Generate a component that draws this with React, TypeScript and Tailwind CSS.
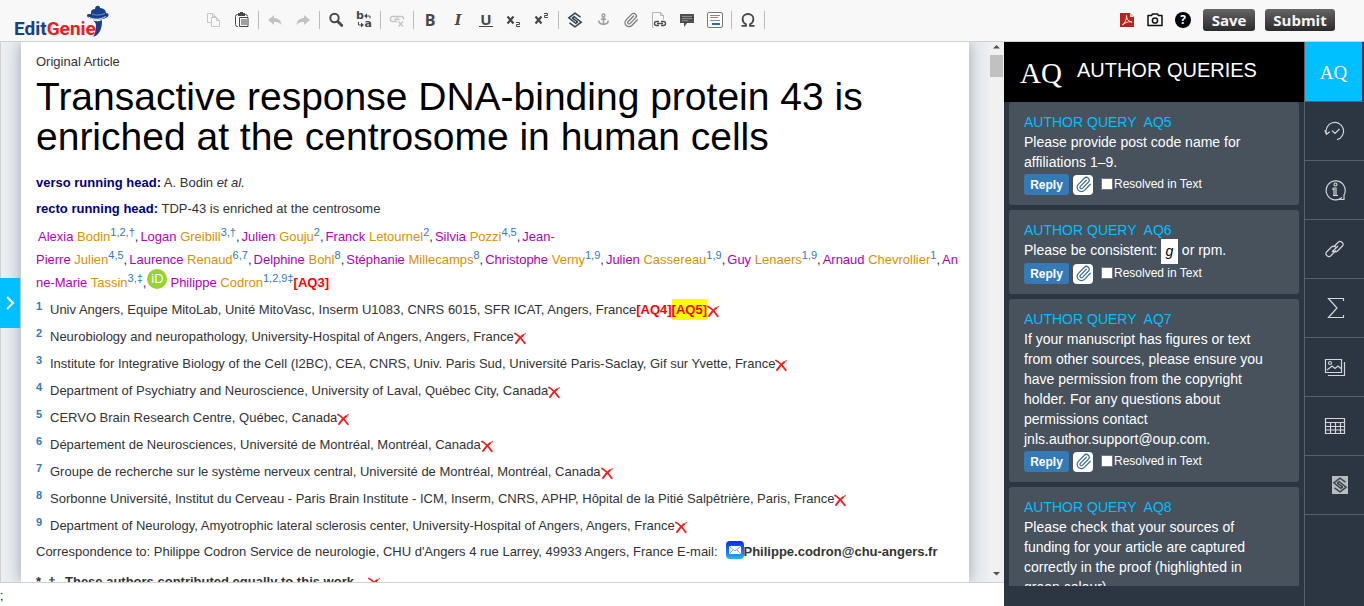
import React from "react";
import { Paperclip } from "lucide-react";

type Author = { first: string; last: string; refs: string };

const authorLines: Author[][] = [
  [
    { first: "Alexia", last: "Bodin", refs: "1,2,†" },
    { first: "Logan", last: "Greibill", refs: "3,†" },
    { first: "Julien", last: "Gouju", refs: "2" },
    { first: "Franck", last: "Letournel", refs: "2" },
    { first: "Silvia", last: "Pozzi", refs: "4,5" },
    { first: "Jean-", last: "", refs: "" },
  ],
  [
    { first: "Pierre", last: "Julien", refs: "4,5" },
    { first: "Laurence", last: "Renaud", refs: "6,7" },
    { first: "Delphine", last: "Bohl", refs: "8" },
    { first: "Stéphanie", last: "Millecamps", refs: "8" },
    { first: "Christophe", last: "Verny", refs: "1,9" },
    { first: "Julien", last: "Cassereau", refs: "1,9" },
    { first: "Guy", last: "Lenaers", refs: "1,9" },
    { first: "Arnaud", last: "Chevrollier", refs: "1" },
    { first: "An", last: "", refs: "" },
  ],
];

const affiliations = [
  "Univ Angers, Equipe MitoLab, Unité MitoVasc, Inserm U1083, CNRS 6015, SFR ICAT, Angers, France",
  "Neurobiology and neuropathology, University-Hospital of Angers, Angers, France",
  "Institute for Integrative Biology of the Cell (I2BC), CEA, CNRS, Univ. Paris Sud, Université Paris-Saclay, Gif sur Yvette, France",
  "Department of Psychiatry and Neuroscience, University of Laval, Québec City, Canada",
  "CERVO Brain Research Centre, Québec, Canada",
  "Département de Neurosciences, Université de Montréal, Montréal, Canada",
  "Groupe de recherche sur le système nerveux central, Université de Montréal, Montréal, Canada",
  "Sorbonne Université, Institut du Cerveau - Paris Brain Institute - ICM, Inserm, CNRS, APHP, Hôpital de la Pitié Salpêtrière, Paris, France",
  "Department of Neurology, Amyotrophic lateral sclerosis center, University-Hospital of Angers, Angers, France",
];

const queries: { id: string; lines: React.ReactNode[] }[] = [
  { id: "AQ5", lines: ["Please provide post code name for", "affiliations 1–9."] },
  {
    id: "AQ6",
    lines: [
      <>
        Please be consistent:{" "}
        <i className="-mt-[2px] -mb-[3px] inline-block h-[25px] w-[17px] bg-white text-center align-middle leading-[25px] text-black">g</i> or rpm.
      </>,
    ],
  },
  {
    id: "AQ7",
    lines: [
      "If your manuscript has figures or text",
      "from other sources, please ensure you",
      "have permission from the copyright",
      "holder. For any questions about",
      "permissions contact",
      "jnls.author.support@oup.com.",
    ],
  },
  {
    id: "AQ8",
    lines: [
      "Please check that your sources of",
      "funding for your article are captured",
      "correctly in the proof (highlighted in",
      "green colour).",
    ],
  },
];

function Svg({ size = 16, children }: { size?: number; children: React.ReactNode }) {
  return (
    <svg width={size} height={size} viewBox="0 0 16 16" fill="none" className="shrink-0" aria-hidden="true">
      {children}
    </svg>
  );
}

function Diamond({ color }: { color: string }) {
  return (
    <g stroke={color} strokeWidth="1.500" fill="none">
      <path d="M13.500 5.200 8 1.200 1.800 5.800 8.800 11.400 10.800 9.900" />
      <path d="M2.500 10.800 8 14.800l6.200-4.600-7-5.600-2 1.500" />
      <path d="M5.200 6.100l5.600 3.800" />
    </g>
  );
}

const icons = {
  copy: (
    <Svg>
      <path d="M5.500 10.500h-4v-9h5l3 3v1M6.500 1.500v3h3" stroke="#c6c6c6" />
      <path d="M5.500 5.500h5l3 3v6h-8zM10.500 5.500v3h3" stroke="#c6c6c6" />
    </Svg>
  ),
  paste: (
    <Svg>
      <path d="M4 14.500H3.500a2 2 0 0 1-2-2v-8a2 2 0 0 1 2-2h8a2 2 0 0 1 2 2" stroke="#484848" />
      <path d="M4 1h7v3H4zM6 0h3v2H6z" fill="#484848" />
      <path d="M5.500 5.500h8.500v9H5.500z" stroke="#484848" fill="#f8f8f8" />
      <path d="M7 8h6M7 10h6M7 12h6" stroke="#484848" />
    </Svg>
  ),
  undo: (
    <Svg>
      <path d="M1 8 7 3v3c4 0 7 2 7.500 7C12.500 10.500 10 10 7 10v3z" fill="#c2c2c2" />
    </Svg>
  ),
  redo: (
    <Svg>
      <path d="M15 8 9 3v3c-4 0-7 2-7.500 7C3.500 10.500 6 10 9 10v3z" fill="#c2c2c2" />
    </Svg>
  ),
  find: (
    <Svg>
      <circle cx="6.500" cy="6" r="4.200" stroke="#484848" strokeWidth="2" />
      <path d="m9.800 9.500 4 4" stroke="#484848" strokeWidth="2.800" strokeLinecap="round" />
    </Svg>
  ),
  replace: (
    <span className="relative block h-5 w-4 font-['DejaVu_Sans',sans-serif] text-[11px] leading-3 font-bold">
      <span className="absolute top-0 left-0">b</span>
      <span className="absolute right-0 bottom-0">a</span>
      <span className="absolute top-[2px] left-0">
        <Svg>
          <path d="M9.500 4H14v2.500M2.500 10v3H7" stroke="#484848" />
          <path d="M11 1.500v5L8 4zM5 10.500v5L8 13z" fill="#484848" />
        </Svg>
      </span>
    </span>
  ),
  unlink: (
    <Svg>
      <path d="M8 9.500H3.500a2 2 0 0 1-2-2v-1a2 2 0 0 1 2-2h3a2 2 0 0 1 2 2M7 4.500h5.500a2 2 0 0 1 2 2v1M5 7.500h5.500" stroke="#c6c6c6" strokeWidth="1.500" />
      <path d="m9.500 9.500 4.500 5m0-5-4.500 5" stroke="#c6c6c6" strokeWidth="1.500" />
    </Svg>
  ),
  bold: <span className="font-['Open_Sans',sans-serif] text-base leading-4 font-bold">B</span>,
  italic: <span className="font-['DejaVu_Serif',serif] text-sm leading-4 font-bold italic">I</span>,
  underline: <span className="border-b border-[#484848] px-px font-['Open_Sans',sans-serif] text-[15px] leading-[14px] font-bold">U</span>,
  sub: (
    <Svg>
      <path d="m1.500 4.500 6 7m0-7-6 7" stroke="#484848" strokeWidth="2.200" />
      <path d="M10 10.500h3.500v2h-3v2H14" stroke="#484848" />
    </Svg>
  ),
  sup: (
    <Svg>
      <path d="m1.500 4.500 6 7m0-7-6 7" stroke="#484848" strokeWidth="2.200" />
      <path d="M10 1.500h3.500v2h-3v2H14" stroke="#484848" />
    </Svg>
  ),
  stack: <Svg><Diamond color="#33434f" /></Svg>,
  anchor: (
    <Svg size={13}>
      <circle cx="8" cy="3" r="1.800" stroke="#a0a0a0" strokeWidth="1.800" />
      <path d="M8 5v9M5 7.500h6M2 9.500c.5 3 3 4.500 6 4.500s5.500-1.500 6-4.500" stroke="#a0a0a0" strokeWidth="2" />
    </Svg>
  ),
  clip: <Paperclip size={16} strokeWidth={1.8} color="#777" />,
  docLink: (
    <Svg>
      <path d="M2.500 15.500H1.500V.5h8l3 3v4M9.500.5v3h3" stroke="#b4b4b4" />
      <path d="M8 9.500H5.500a2 2 0 1 0 0 4H8m2-4h2.500a2 2 0 1 1 0 4H10M6 11.500h6" stroke="#505050" strokeWidth="1.400" />
    </Svg>
  ),
  comment: (
    <Svg>
      <path d="M1 2h14v9H8l-3 4v-4H1z" fill="#505050" />
      <path d="M3 4.500h10M3 6.500h10M3 8.500h6" stroke="#8a8a8a" />
    </Svg>
  ),
  placeholder: (
    <Svg>
      <rect x=".5" y=".5" width="15" height="15" rx="1.500" stroke="#777" fill="#fff" />
      <path d="M3 3.500h10M3 5.500h8M3 8.500h10" stroke="#888" />
      <path d="M5 12h8" stroke="#1672c7" strokeWidth="2" />
    </Svg>
  ),
  omega: (
    <Svg>
      <path d="M1.500 13.800H6v-1.500C3.500 11 2.600 9.300 2.600 7c0-3 2.200-5 5.400-5s5.400 2 5.400 5c0 2.300-.9 4-3.400 5.300v1.500h4.500" stroke="#484848" strokeWidth="1.800" />
    </Svg>
  ),
};

const groups: [keyof typeof icons, string][][] = [
  [["copy", "Copy"], ["paste", "Paste"]],
  [["undo", "Undo"], ["redo", "Redo"]],
  [["find", "Find"], ["replace", "Replace"]],
  [["unlink", "Unlink"]],
  [["bold", "Bold"], ["italic", "Italic"], ["underline", "Underline"], ["sub", "Subscript"], ["sup", "Superscript"]],
  [["stack", "Symbols"], ["anchor", "Anchor"], ["clip", "Attach"], ["docLink", "Document link"], ["comment", "Comment"], ["placeholder", "Placeholder"]],
  [["omega", "Special character"]],
];

function Logo() {
  return (
    <svg width="98" height="34" viewBox="0 0 98 34" role="img" aria-label="EditGenie">
      <text x="0" y="32" fontSize="19" fontWeight="bold" fontFamily="Roboto, sans-serif">
        <tspan fill="#17408b">Edit</tspan>
        <tspan fill="#ee1c25">Genie</tspan>
      </text>
      <path d="M77 9c0-2 2-3 4-3 0-4 5-4 5-1 4 0 6 3 6 5 2 0 3 1 2.500 2.500-1 2.500-6 4-10 4C78 16.500 73 15 73 12.500c0-2 2-1.500 4-1.500z" fill="#17408b" />
      <path d="M74.500 14c5 3 12 3 17-.5" stroke="#f8f8f8" strokeWidth="1" fill="none" />
      <path d="M78 11c3 1.500 8 1.500 13-.5" stroke="#8fa5d0" strokeWidth=".8" fill="none" />
      <path d="M79 17.500c3 1 6 1 9-.5 0 5-.5 8-2 11-1.500 3-3.500 5-7 6 2-3 2.500-5 2.500-8 1-3 1-6-2.500-8.500z" fill="#17408b" />
    </svg>
  );
}

function Header() {
  return (
    <header className="flex h-[42px] shrink-0 items-center border-b border-[#d1d1d1] bg-[#f8f8f8] pb-[2px]">
      <a href="#home" className="ml-[14px] block h-[34px] w-[186px]"><Logo /></a>
      <div role="toolbar" className="flex items-center text-[#484848]">
        {groups.map((group, i) => (
          <div key={i} className="flex items-center">
            {group.map(([key, label]) => (
              <button key={key} aria-label={label} className="flex h-7 w-7 items-center justify-center">{icons[key]}</button>
            ))}
            <span className="mx-[2px] h-[18px] w-px bg-[#bcbcbc]" />
          </div>
        ))}
      </div>
      <div className="mr-[29px] ml-auto flex items-center">
        <button aria-label="PDF" className="mr-3">
          <Svg>
            <path d="M1 1h10l4 4v10H1z" fill="#b5261e" />
            <path d="M11 1v4h4z" fill="#e6c8c4" />
            <path d="M3.500 13C6 11 8 7 7.500 3.500c0 4 2 6 5.500 6.500-3-.7-6 0-9.500 3z" stroke="#f3dcda" />
          </Svg>
        </button>
        <button aria-label="Snapshot" className="mr-3">
          <Svg>
            <path d="M1 3.500h3.500L5.500 2h5l1 1.500H15v10H1z" stroke="#111" strokeWidth="1.500" strokeLinejoin="round" />
            <circle cx="8" cy="8.500" r="2.600" stroke="#111" strokeWidth="1.500" />
          </Svg>
        </button>
        <button aria-label="Help" className="mr-3 flex h-4 w-4 items-center justify-center rounded-full bg-black font-['Open_Sans',sans-serif] text-xs leading-4 font-bold text-white">?</button>
        <button className="mr-[10px] h-[22px] w-[52px] rounded-[3px] bg-linear-to-b from-[#666] to-[#2a2a2a] font-['Open_Sans',sans-serif] text-[15px] leading-[22px] font-bold text-[#f4f4f4]">Save</button>
        <button className="h-[22px] w-[70px] rounded-[3px] bg-linear-to-b from-[#666] to-[#2a2a2a] font-['Open_Sans',sans-serif] text-[15px] leading-[22px] font-bold text-[#f4f4f4]">Submit</button>
      </div>
    </header>
  );
}

function Cross() {
  return (
    <button aria-label="Remove" className="inline-block align-[-4px]">
      <svg width="13" height="13" viewBox="0 0 13 13" fill="none" className="block">
        <path d="M1 1.500C4 3 7 6 10.800 11.200" stroke="#f41c1c" strokeWidth="1.800" strokeLinecap="round" />
        <path d="M11.500 1.500 8 4" stroke="#f65a5a" strokeWidth="1.200" strokeLinecap="round" />
        <path d="M9 3.300C6 5.500 4 8 2 11" stroke="#f41c1c" strokeWidth="2" strokeLinecap="round" />
      </svg>
    </button>
  );
}

function Refs({ children }: { children: string }) {
  return <a href="#refs" className="relative -top-[5px] text-[11px] leading-none text-[#337ab7]">{children}</a>;
}

function AuthorName({ a }: { a: Author }) {
  return (
    <>
      <span className="text-[#b300b3]">{a.first}</span>
      {a.last && <span className="text-[#dd9000]"> {a.last}</span>}
      {a.refs && <Refs>{a.refs}</Refs>}
    </>
  );
}

function Article() {
  return (
    <article className="min-w-0 flex-1 overflow-hidden bg-white pt-[10px] pl-[15px] text-[13px] leading-5 whitespace-nowrap text-[#333] shadow-[0_0_16px_#9aa0aa]">
      <p>Original Article</p>
      <h1 className="mt-[5px] text-[39px] leading-10 text-black">
        Transactive response DNA-binding protein 43 is
        <br />
        enriched at the centrosome in human cells
      </h1>
      <p className="mt-4"><b className="text-[#000080]">verso running head:</b> A. Bodin <i>et al.</i></p>
      <p className="mt-[6px]"><b className="text-[#000080]">recto running head:</b> TDP-43 is enriched at the centrosome</p>
      <div className="mt-[6px] leading-[23px]">
        {authorLines.map((line, i) => (
          <div key={i} className={i === 0 ? "pl-[2px]" : ""}>
            {line.map((a, j) => (
              <React.Fragment key={j}>
                {j > 0 && <span className="mr-[2px]">,</span>}
                <AuthorName a={a} />
              </React.Fragment>
            ))}
          </div>
        ))}
        <div className="flex">
          <span><AuthorName a={{ first: "ne-Marie", last: "Tassin", refs: "3,‡" }} />,</span>
          <a href="#orcid" aria-label="ORCID" className="mr-[3px] ml-px -mt-[2px] flex h-5 w-5 items-center justify-center rounded-full bg-[#97d32a] text-[13px] leading-5 text-white">iD</a>
          <span>
            <AuthorName a={{ first: "Philippe", last: "Codron", refs: "1,2,9‡" }} />
            <b className="text-[#f00]">[AQ3]</b>
          </span>
        </div>
      </div>
      <ol className="mt-[2px]">
        {affiliations.map((text, i) => (
          <li key={text} className="flex h-[27px] items-center">
            <a href="#aff" className="w-[14px] pb-2 text-[11px] leading-4 font-bold text-[#337ab7]">{i + 1}</a>
            <span>
              {text}
              {i === 0 && (
                <b className="text-[#f00]">[AQ4]<mark className="bg-[#ff0] py-[3px] text-[#f00]">[AQ5]</mark></b>
              )}
              <Cross />
            </span>
          </li>
        ))}
      </ol>
      <p className="mt-[3px] flex h-5 items-center">
        Correspondence to: Philippe Codron Service de neurologie, CHU d'Angers 4 rue Larrey, 49933 Angers, France E-mail:
        <svg width="18" height="18" viewBox="0 0 18 18" className="mb-1 ml-2" aria-hidden="true">
          <defs>
            <linearGradient id="mail" x1="0" y1="0" x2="0" y2="1"><stop offset="0" stopColor="#0a28f0" /><stop offset="1" stopColor="#22b4fb" /></linearGradient>
          </defs>
          <rect width="18" height="18" rx="4" fill="url(#mail)" />
          <rect x="3" y="5" width="12" height="8" rx="1" fill="#fff" />
          <path d="m3.500 5.500 5.500 4.500 5.500-4.500M3.500 12.500l3.500-3.500m4 0 3.500 3.500" stroke="#6d90dd" fill="none" strokeWidth=".8" />
        </svg>
        <a href="#mail" className="font-bold">Philippe.codron@chu-angers.fr</a>
      </p>
      <p className="mt-[10px]"><b><span className="inline-block w-[29px]">*, †</span>These authors contributed equally to this work.</b><span className="ml-[10px]"><Cross /></span></p>
    </article>
  );
}

function QueryCard({ id, lines }: { id: string; lines: React.ReactNode[] }) {
  return (
    <section className="mb-[5px] shrink-0 rounded-[3px] bg-[#47525d] px-[15px] pt-[10px] pb-[10px] text-sm leading-5 whitespace-nowrap text-white">
      <h3 className="text-[#00bfff]">AUTHOR QUERY&nbsp; {id}</h3>
      {lines.map((line, i) => <p key={i}>{line}</p>)}
      <div className="mt-[2px] flex h-[21px] items-center">
        <button className="h-[21px] w-[45px] rounded-[3px] bg-[#337ab7] text-xs leading-5 font-bold">Reply</button>
        <button aria-label="Attach file" className="ml-1 flex h-5 w-5 items-center justify-center rounded-[4px] bg-white">
          <Paperclip size={17} strokeWidth={1.7} color="#3f6c8c" />
        </button>
        <label className="ml-2 flex h-5 items-center pb-px text-xs">
          <input type="checkbox" className="mr-px h-3 w-3 appearance-none border border-[#767676] bg-white" />
          Resolved in Text
        </label>
      </div>
    </section>
  );
}

function RailSvg({ children }: { children: React.ReactNode }) {
  return (
    <svg width="22" height="22" viewBox="0 0 22 22" fill="none" stroke="#d3d5d8" strokeWidth="1.200" aria-hidden="true">{children}</svg>
  );
}

const rail: [string, React.ReactNode][] = [
  ["History", <RailSvg><path d="M2.500 14A8.800 8.800 0 1 1 13 19.700M.8 10.500l1.700 3.800 3.300-2.500M8 10.500l3 3 4.500-4.500" /></RailSvg>],
  ["Information", <RailSvg><path d="M18 18.500a9.500 9.500 0 1 1 2-2.500v4.500h-4M9 9h3v7.500h2M9 16.500h3M9 9v1.500h1v6" /><circle cx="11.500" cy="5.500" r="1.500" /></RailSvg>],
  ["Links", <RailSvg><path d="m9.500 9 5-5c2-2 6 1.500 4 4l-5 5c-1.500 1.500-4 1-4.800-1M12 12.500l-5.500 5.500c-2.200 2-6-1.500-4-4l5-5c1.500-1.500 4-1 4.800 1M8 14l6-6" /></RailSvg>],
  ["Equations", <RailSvg><path d="M19.500 4V1.500H4.500L13 11l-8.500 9.500h15V18" /></RailSvg>],
  ["Figures", <RailSvg><path d="M1.500 3.500h16v13h-16zM20.500 6v13.500H4M3 14l5-4 3 2.500 3-2.500 3 2.500" /><circle cx="6" cy="7" r="1.500" /></RailSvg>],
  ["Tables", <RailSvg><path d="M1.500 3.500h19v15h-19zM1.500 7.500h19M1.500 11.500h19M1.500 15h19M6.500 7.500v11M11.500 7.500v11M16.500 7.500v11" /></RailSvg>],
  ["Symbols", <span className="ml-[10px] flex h-[18px] w-4 items-center justify-center bg-[#b9bcbf]"><Svg><Diamond color="#3c454d" /></Svg></span>],
];

export default function App() {
  return (
    <div className="flex h-screen flex-col overflow-hidden bg-white font-['Liberation_Sans',Arial,sans-serif]">
      <Header />
      <div className="flex min-h-0 flex-1">
        <main className="relative flex min-w-0 flex-1 flex-col">
          <div className="flex min-h-0 flex-1 overflow-hidden border-b border-l border-[#d1d1d1]">
            <div className="flex min-w-0 flex-1 overflow-hidden bg-[#ebeff5] px-5">
              <Article />
            </div>
            <div className="flex w-[15px] shrink-0 flex-col items-center justify-between bg-[#f1f1f1]" aria-hidden="true">
              <div className="flex flex-col items-center">
                <svg width="7" height="13" viewBox="0 0 7 13"><path d="M0 6.500 3.500 3 7 6.500z" fill="#505050" /></svg>
                <div className="h-[22px] w-[13px] bg-[#c1c1c1]" />
              </div>
              <svg width="7" height="13" viewBox="0 0 7 13"><path d="M0 3 3.500 6.500 7 3z" fill="#505050" /></svg>
            </div>
          </div>
          <div className="h-[23px] shrink-0 pt-[3px] text-xs leading-5">;</div>
          <button aria-label="Open side panel" className="absolute top-[236px] left-0 flex h-[50px] w-5 items-center justify-center bg-[#00bfff]">
            <svg width="10" height="14" viewBox="0 0 10 14" fill="none"><path d="m2 1 6 6-6 6" stroke="#fff" strokeWidth="2" /></svg>
          </button>
        </main>
        <aside className="flex w-[300px] shrink-0 flex-col bg-[#2b3642] pb-5">
          <h2 className="flex h-[60px] shrink-0 items-center bg-black pl-4 text-white">
            <span className="mt-1 font-['Liberation_Serif',serif] text-[29px]">AQ</span>
            <span className="mb-1 ml-[15px] text-[20px]">AUTHOR QUERIES</span>
          </h2>
          <div className="flex min-h-0 flex-1 flex-col overflow-hidden px-[5px]">
            {queries.map((q) => <QueryCard key={q.id} {...q} />)}
          </div>
        </aside>
        <nav className="flex w-[60px] shrink-0 flex-col border-l border-[#56616c] bg-[#2b3642]">
          <button className="mr-[2px] h-[59px] shrink-0 bg-[#00bfff] pt-[3px] font-['Liberation_Serif',serif] text-[19px] text-white">AQ</button>
          {rail.map(([label, icon]) => (
            <button key={label} aria-label={label} className="flex h-[59px] shrink-0 items-center justify-center border-t border-[#56616c]">{icon}</button>
          ))}
          <div className="border-t border-[#56616c]" />
        </nav>
      </div>
    </div>
  );
}
